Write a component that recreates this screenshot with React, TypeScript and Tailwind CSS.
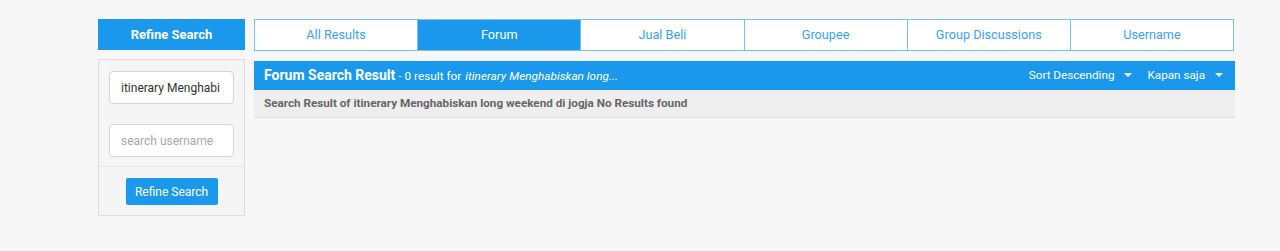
import React from 'react';

const tabs = ['All Results', 'Forum', 'Jual Beli', 'Groupee', 'Group Discussions', 'Username'];

const Caret: React.FC = () => (
  <span className="ml-[10px] inline-block w-0 h-0 border-l-[4px] border-r-[4px] border-t-[4px] border-l-transparent border-r-transparent border-t-white align-middle" />
);

const App: React.FC = () => {
  return (
    <div
      className="w-full h-[251px] bg-[#f7f7f7] pt-[19px]"
      style={{ fontFamily: 'Roboto, "Liberation Sans", sans-serif' }}
    >
      <div className="ml-[98px] w-[1137px] flex gap-[9px]">
        {/* Left column */}
        <div className="w-[147px] shrink-0">
          <div className="h-[31px] bg-[#1a98ec] text-white font-bold text-[13px] flex items-center justify-center">
            Refine Search
          </div>
          <div className="mt-[9px] border border-[#dcdcdc] bg-[#f5f5f5]">
            <div className="px-[10px] pt-[11px] pb-[9px] flex flex-col gap-[20px]">
              <div className="h-[33px] bg-white border border-[#d6d6d6] rounded-[4px] flex items-center px-[11px] text-[12px] text-[#333] overflow-hidden whitespace-nowrap">
                itinerary Menghabi
              </div>
              <div className="h-[33px] bg-white border border-[#d6d6d6] rounded-[4px] flex items-center px-[11px] text-[12px] text-[#a9a9a9] overflow-hidden whitespace-nowrap">
                search username
              </div>
            </div>
            <div className="border-t border-[#e6e6e6] flex justify-center pt-[11px] pb-[10px]">
              <button className="h-[27px] w-[92px] bg-[#1a98ec] text-white text-[12px] rounded-[2px]">
                Refine Search
              </button>
            </div>
          </div>
        </div>

        {/* Right column */}
        <div className="flex-1">
          <div className="flex h-[32px] w-[980px] border border-[#7cc0f3] bg-white">
            {tabs.map((t, i) => (
              <div
                key={t}
                className={`flex-1 flex items-center justify-center text-[12.7px] ${
                  i > 0 ? 'border-l border-[#7cc0f3]' : ''
                } ${t === 'Forum' ? 'bg-[#1a98ec] text-white' : 'text-[#3ea2ef]'}`}
              >
                {t}
              </div>
            ))}
          </div>

          <div className="mt-[10px] h-[29px] bg-[#1a98ec] text-white flex items-center justify-between pl-[10px] pr-[12px]">
            <div className="flex items-baseline whitespace-nowrap">
              <span className="font-bold text-[14px]">Forum Search Result</span>
              <span className="text-[11.8px] ml-[3px]">- 0 result for </span>
              <span className="text-[11.8px] italic ml-[4px]">itinerary Menghabiskan long...</span>
            </div>
            <div className="flex items-center text-[11.7px] gap-[15px]">
              <span className="flex items-center">
                Sort Descending
                <Caret />
              </span>
              <span className="flex items-center">
                Kapan saja
                <Caret />
              </span>
            </div>
          </div>
          <div className="h-[28px] bg-[#eeeeee] border-b border-[#dddddd] flex items-center px-[10px] text-[11.7px] font-bold text-[#666]">
            Search Result of itinerary Menghabiskan long weekend di jogja No Results found
          </div>
        </div>
      </div>
    </div>
  );
};

export default App;
